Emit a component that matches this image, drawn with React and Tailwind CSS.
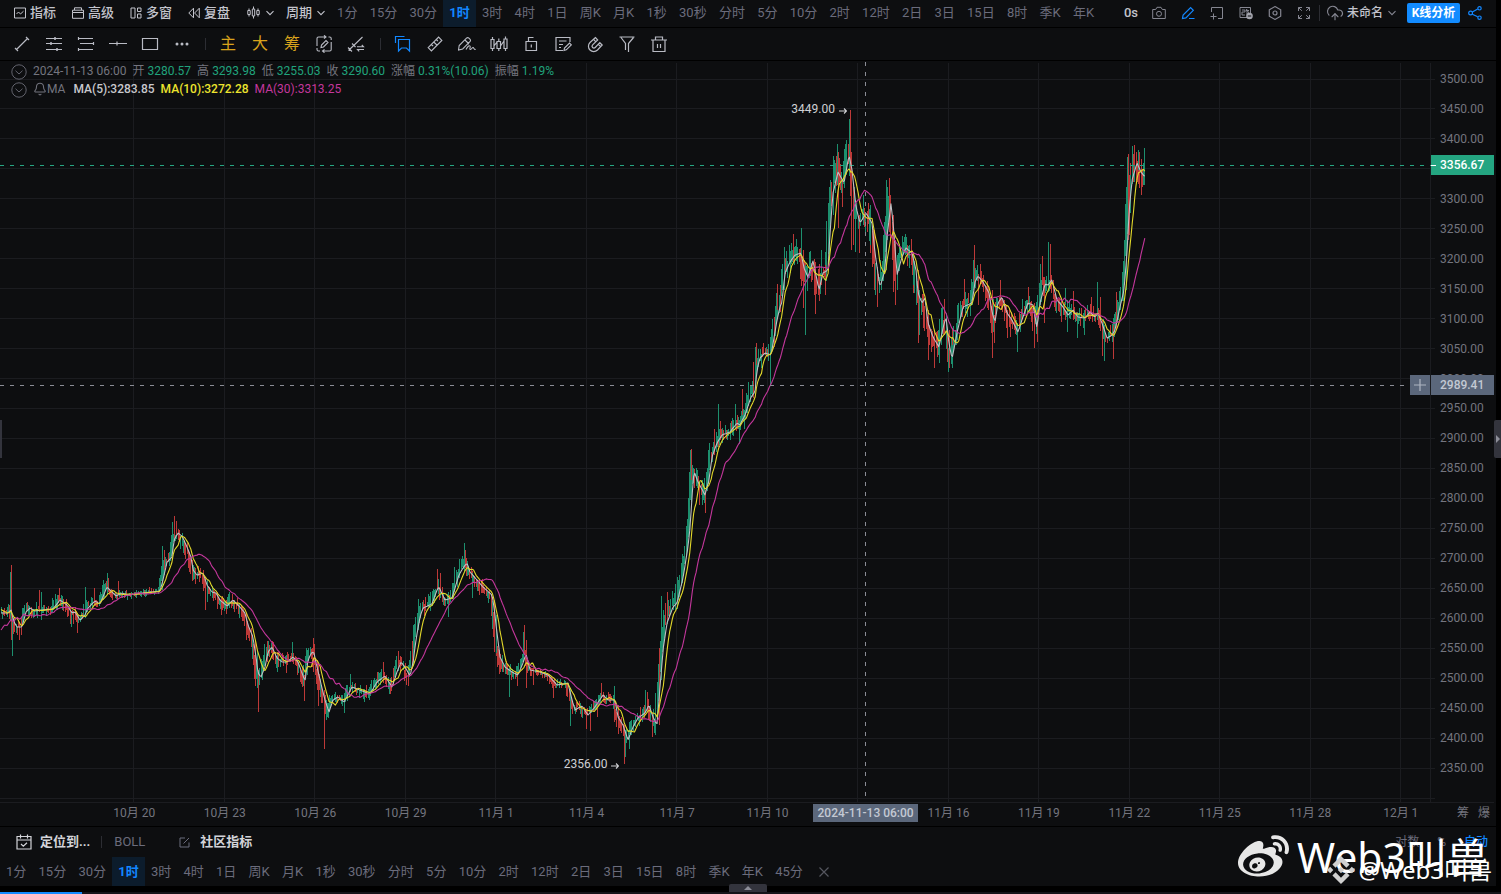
import React from "react";
import { FaWeibo } from "react-icons/fa";
import { SiBinance } from "react-icons/si";
import { Bell, Camera, CloudUpload } from "lucide-react";

const PERIODS = ["1分", "15分", "30分", "1时", "3时", "4时", "1日", "周K", "月K", "1秒", "30秒", "分时", "5分", "10分", "2时", "12时", "2日", "3日", "15日", "8时", "季K", "年K"];
const DATES = ["10月 20", "10月 23", "10月 26", "10月 29", "11月 1", "11月 4", "11月 7", "11月 10", "", "11月 16", "11月 19", "11月 22", "11月 25", "11月 28", "12月 1"];
const PRICES = Array.from({ length: 24 }, (_, i) => (3500 - i * 50).toFixed(2));

/* Five-bar average, as x,y pairs in chart units. The slower averages derive from it. */
const MA5 = [
  -40, 644, -12, 640, -8, 603, 1, 613, 8, 613, 11, 610, 14, 622, 17, 627, 22, 627, 26, 612, 30, 608, 35, 611, 42, 610, 53, 609, 60, 600, 67, 605, 72, 613, 75, 612, 80, 620, 85, 615, 88, 608, 95, 601, 100, 604, 107, 587, 112, 592, 116, 596, 122, 593, 128, 595, 143, 593, 160, 591, 163, 580, 167, 562, 172, 557, 174, 540, 178, 533, 182, 536, 187, 547, 191, 557, 193, 570, 197, 575, 203, 573, 207, 585, 212, 592, 216, 593, 220, 600, 227, 606, 233, 600, 240, 607, 245, 613, 248, 625, 253, 637, 256, 657, 258, 673, 261, 677, 265, 667, 268, 652, 272, 647, 277, 658, 282, 662, 287, 662, 293, 657, 298, 662, 302, 673, 305, 681, 308, 660, 312, 652, 314, 653, 317, 667, 322, 688, 325, 700, 329, 712, 333, 700, 338, 697, 344, 702, 352, 687, 360, 690, 370, 694, 377, 682, 385, 676, 392, 687, 397, 672, 401, 662, 405, 667, 410, 676, 413, 663, 416, 640, 420, 617, 423, 608, 432, 604, 437, 590, 439, 587, 445, 600, 452, 598, 455, 588, 459, 575, 463, 568, 467, 563, 470, 572, 477, 580, 483, 587, 492, 595, 494, 607, 497, 633, 500, 657, 505, 667, 512, 672, 518, 675, 523, 663, 526, 654, 530, 670, 540, 672, 548, 675, 557, 685, 568, 683, 572, 700, 575, 710, 582, 706, 588, 715, 595, 707, 603, 695, 608, 700, 615, 700, 618, 717, 623, 725, 628, 740, 633, 727, 638, 718, 645, 713, 649, 705, 653, 717, 657, 725, 659, 700, 663, 650, 667, 623, 673, 607, 677, 603, 683, 578, 688, 547, 690, 528, 692, 497, 694, 471, 698, 482, 705, 495, 709, 480, 712, 457, 717, 443, 722, 435, 730, 432, 737, 423, 740, 425, 745, 415, 751, 397, 755, 392, 757, 370, 760, 358, 765, 353, 771, 355, 774, 338, 777, 320, 780, 307, 782, 302, 785, 273, 790, 262, 795, 255, 801, 253, 804, 268, 808, 277, 813, 261, 817, 280, 819, 290, 823, 273, 828, 270, 830, 233, 833, 193, 838, 172, 844, 183, 849, 155, 852, 170, 856, 207, 860, 223, 866, 213, 872, 223, 875, 253, 880, 287, 885, 270, 887, 237, 891, 203, 894, 233, 897, 275, 902, 257, 906, 248, 912, 253, 916, 270, 918, 293, 922, 303, 925, 298, 928, 323, 933, 337, 939, 347, 943, 328, 946, 317, 949, 343, 952, 359, 957, 333, 963, 307, 972, 303, 975, 282, 978, 276, 983, 282, 989, 293, 992, 312, 995, 322, 998, 303, 1002, 297, 1007, 313, 1012, 320, 1018, 332, 1023, 317, 1028, 303, 1033, 305, 1037, 328, 1040, 303, 1045, 284, 1048, 285, 1052, 280, 1057, 300, 1063, 307, 1068, 315, 1073, 310, 1078, 317, 1085, 318, 1090, 312, 1095, 317, 1098, 313, 1102, 323, 1107, 338, 1112, 335, 1115, 330, 1120, 307, 1124, 290, 1127, 253, 1129, 213, 1132, 180, 1137, 163, 1141, 172, 1144, 176,
];

/* Typical half-range of a bar by position. */
const RANGE = [0, 8, 60, 8, 118, 5, 158, 4, 165, 8, 240, 9, 270, 9, 340, 7, 415, 9, 500, 8, 540, 4, 565, 6, 640, 8, 660, 13, 690, 13, 730, 9, 790, 14, 830, 18, 890, 14, 930, 14, 990, 13, 1060, 10, 1110, 9, 1130, 17, 1150, 14];

/* Long wicks: x, high, low, 1 for a rising bar. */
const WICKS = [
  10, 572, 620, 1, 11, 565, 640, 0, 12, 617, 656, 1, 19, 622, 640, 0, 39, 590, 607, 0, 41, 592, 620, 1, 59, 588, 600, 0, 70, 610, 624, 0, 71, 613, 627, 1, 77, 615, 633, 0, 85, 587, 618, 1, 94, 588, 605, 0, 103, 580, 600, 1, 107, 573, 590, 1, 108, 578, 592, 0, 118, 581, 595, 0, 162, 546, 590, 1, 164, 550, 570, 0, 172, 522, 552, 1, 174, 516, 533, 0, 176, 521, 535, 0, 192, 560, 581, 0, 195, 568, 584, 0, 205, 577, 610, 0, 207, 580, 602, 1, 217, 592, 609, 0, 221, 598, 615, 0, 226, 600, 614, 0, 239, 603, 618, 1, 246, 613, 640, 0, 255, 640, 686, 0, 257, 650, 688, 1, 258, 670, 712, 0, 259, 668, 685, 1, 267, 641, 660, 0, 271, 643, 650, 1, 273, 642, 655, 0, 277, 655, 672, 1, 286, 660, 673, 0, 292, 642, 660, 1, 302, 667, 687, 0, 304, 675, 701, 0, 307, 652, 675, 1, 313, 638, 655, 0, 314, 644, 665, 0, 317, 660, 690, 0, 318, 665, 706, 0, 324, 690, 749, 0, 326, 700, 720, 1, 328, 703, 718, 1, 344, 699, 713, 1, 350, 674, 690, 1, 383, 662, 675, 0, 377, 672, 683, 0, 398, 651, 668, 0, 390, 683, 694, 0, 408, 672, 686, 0, 413, 625, 665, 1, 418, 599, 630, 1, 437, 569, 590, 0, 440, 573, 592, 0, 448, 595, 617, 1, 454, 567, 592, 1, 459, 559, 575, 1, 464, 543, 562, 1, 465, 550, 568, 0, 472, 573, 598, 1, 494, 600, 652, 0, 496, 615, 653, 1, 499, 650, 674, 0, 509, 668, 697, 1, 517, 672, 686, 0, 523, 632, 662, 1, 524, 625, 655, 0, 526, 640, 688, 0, 533, 668, 685, 0, 553, 680, 698, 0, 570, 688, 726, 1, 586, 710, 729, 0, 590, 712, 731, 0, 597, 703, 717, 0, 601, 683, 698, 0, 614, 686, 700, 1, 618, 705, 734, 0, 624, 725, 764, 0, 625, 730, 757, 1, 629, 735, 749, 1, 645, 690, 712, 1, 647, 692, 712, 0, 652, 715, 737, 0, 655, 718, 735, 1, 659, 672, 725, 0, 661, 596, 680, 1, 663, 610, 630, 1, 665, 603, 625, 0, 667, 592, 620, 0, 677, 577, 605, 1, 686, 531, 555, 1, 689, 473, 530, 1, 690, 450, 500, 1, 691, 449, 480, 0, 702, 480, 505, 1, 705, 490, 513, 0, 718, 404, 440, 1, 714, 429, 455, 0, 720, 421, 440, 0, 735, 404, 428, 1, 739, 420, 444, 1, 742, 389, 415, 0, 744, 410, 429, 1, 748, 382, 405, 1, 755, 347, 390, 1, 756, 343, 365, 0, 770, 350, 386, 1, 772, 319, 350, 1, 776, 293, 320, 1, 777, 284, 310, 0, 784, 247, 290, 1, 793, 234, 262, 0, 801, 228, 256, 1, 803, 250, 308, 0, 805, 265, 335, 1, 815, 262, 314, 0, 821, 250, 275, 1, 825, 265, 295, 0, 829, 187, 260, 1, 833, 156, 215, 1, 837, 144, 185, 1, 838, 152, 228, 0, 842, 180, 207, 0, 846, 140, 175, 1, 849, 119, 165, 1, 850, 110, 175, 0, 851, 152, 250, 0, 853, 187, 245, 0, 855, 200, 252, 1, 859, 215, 253, 0, 863, 195, 225, 1, 870, 205, 245, 1, 874, 230, 290, 0, 877, 270, 307, 0, 881, 272, 290, 1, 886, 180, 270, 1, 887, 187, 240, 1, 889, 178, 215, 0, 890, 195, 220, 0, 893, 215, 292, 0, 895, 240, 305, 0, 897, 255, 290, 1, 905, 234, 255, 1, 913, 255, 285, 1, 918, 270, 343, 0, 919, 290, 335, 1, 928, 310, 360, 0, 934, 330, 368, 0, 939, 335, 363, 1, 941, 308, 345, 1, 944, 299, 325, 0, 949, 330, 368, 0, 952, 345, 368, 1, 957, 305, 340, 1, 964, 279, 305, 0, 974, 245, 285, 0, 973, 260, 290, 1, 978, 275, 305, 0, 992, 290, 358, 0, 994, 315, 343, 0, 1000, 280, 300, 0, 1007, 310, 338, 0, 1017, 325, 352, 1, 1028, 287, 305, 0, 1034, 303, 348, 0, 1037, 310, 342, 0, 1040, 264, 305, 1, 1042, 256, 285, 0, 1044, 280, 323, 0, 1048, 242, 292, 1, 1050, 244, 285, 0, 1061, 300, 322, 0, 1067, 300, 332, 1, 1065, 288, 305, 1, 1073, 291, 312, 0, 1077, 312, 338, 1, 1084, 310, 335, 1, 1091, 297, 315, 0, 1097, 282, 315, 1, 1100, 297, 330, 0, 1102, 320, 356, 0, 1104, 325, 361, 1, 1113, 325, 359, 0, 1116, 292, 330, 0, 1120, 288, 310, 1, 1126, 187, 290, 1, 1127, 157, 206, 1, 1128, 154, 240, 0, 1129, 175, 235, 0, 1130, 175, 213, 1, 1132, 146, 175, 1, 1134, 145, 165, 0, 1138, 150, 170, 1, 1139, 152, 175, 0, 1141, 170, 195, 0, 1144, 148, 185, 1,
];

const STEP = 90.5 / 72;

function at(series, x) {
  if (x <= series[0]) return series[1];
  for (let i = 2; i < series.length; i += 2) {
    if (x <= series[i]) {
      const t = (x - series[i - 2]) / (series[i] - series[i - 2]);
      return series[i - 1] + t * (series[i + 1] - series[i - 1]);
    }
  }
  return series[series.length - 1];
}

function average(groups) {
  const pts = [];
  for (let x = 1; x <= 1145; x += STEP) {
    let sum = 0;
    for (let g = 0; g < groups; g++) sum += at(MA5, x - g * 5 * STEP);
    pts.push(x.toFixed(1) + "," + (sum / groups).toFixed(1));
  }
  return pts.join(" ");
}

function buildBars() {
  let seed = 11;
  const rnd = () => {
    seed = (seed * 16807) % 2147483647;
    return seed / 2147483647;
  };
  const bars = [];
  for (let x = 1; x <= 1144; x += STEP) {
    const a = at(MA5, x + 1);
    const b = at(MA5, x + 3);
    const r = at(RANGE, x);
    const drift = (rnd() - 0.5) * r * 0.7;
    const high = Math.min(a, b) - r * (0.1 + rnd() * 0.8) + drift;
    const low = Math.max(a, b) + r * (0.1 + rnd() * 0.8) + drift;
    const up = rnd() < 0.52 + Math.max(-0.36, Math.min(0.36, (a - b) / 8));
    bars.push({ x: Math.floor(x), high: Math.round(high), low: Math.round(low), up });
  }
  for (let i = 0; i < WICKS.length; i += 4) {
    bars.push({ x: WICKS[i], high: WICKS[i + 1], low: WICKS[i + 2], up: WICKS[i + 3] === 1 });
  }
  return bars;
}

const BARS = buildBars();
const LINE5 = average(1);
const LINE10 = average(2);
const LINE30 = average(6);

function Ico({ d, size = "size-[18px]", box = 18, w = 1.2, className = "", children }) {
  return (
    <svg viewBox={`0 0 ${box} ${box}`} className={`${size} shrink-0 ${className}`} fill="none" stroke="currentColor" strokeWidth={w} aria-hidden="true">
      {d && <path d={d} />}
      {children}
    </svg>
  );
}

function Tool({ label, children, className = "text-[#b9bbc4]" }) {
  return (
    <button type="button" aria-label={label} className={`flex h-8 w-8 shrink-0 items-center justify-center ${className}`}>
      {children}
    </button>
  );
}

function Chevron() {
  return <Ico box={8} size="size-2" d="M0.5 2.2L4 5.7L7.5 2.2" w={1.1} />;
}

function Periods({ items, label, className }) {
  return (
    <nav aria-label={label} className={`flex h-full shrink-0 justify-between ${className}`}>
      {items.map((p) => (
        <button
          key={p}
          type="button"
          className={`flex h-full items-center px-1.5 whitespace-nowrap ${p === "1时" ? "bg-[#0c1c2c] font-bold text-[#1287ff]" : "text-[#6b6c7c]"}`}
        >
          {p}
        </button>
      ))}
    </nav>
  );
}

function TopBar() {
  return (
    <header className="flex h-7 shrink-0 items-center overflow-hidden border-b border-black pr-3.5 pl-3.5 text-[13px] text-[#c3c4cc]">
      <div className="flex shrink-0 items-center gap-4 pb-0.5 font-medium whitespace-nowrap">
        <button type="button" className="flex items-center gap-1">
          <Ico box={12} size="size-3" d="M.5 1h11v10H.5zM2.5 7L4.5 5l2 2L9.500 4.200" w={1} />
          指标
        </button>
        <button type="button" className="flex items-center gap-1">
          <Ico box={12} size="size-3" d="M2.500 3V.8h7V3M.5 5.500V3.200h11v2.300M.5 5.500h11v5.800H.5z" w={1} />
          高级
        </button>
        <button type="button" className="flex items-center gap-1">
          <Ico box={12} size="size-3" d="M1 1h4v10H1zM7.500 1H11v3.500H7.500zM7.500 7H11v4H7.500z" w={1} />
          多窗
        </button>
        <button type="button" className="flex items-center gap-1">
          <Ico box={12} size="size-3" d="M5.500 1.200v9.600L.8 6zM11.300 1.200v9.600L6.600 6z" w={1} />
          复盘
        </button>
      </div>
      <div className="ml-[17px] flex shrink-0 items-center gap-3 pb-0.5 font-medium whitespace-nowrap">
        <button type="button" aria-label="K线样式" className="flex items-center gap-1.5">
          <Ico box={13} size="size-[13px]" d="M.8 4.500h2.400v4H.8zM5.300 3h2.400v7H5.300zM9.800 4.500h2.400v4H9.800zM2 2.500v2M2 8.500v2M6.500 .5V3M6.500 10v2.500M11 2.500v2M11 8.500v2" w={1} />
          <Chevron />
        </button>
        <button type="button" className="flex items-center gap-[5px]">
          周期
          <Chevron />
        </button>
      </div>
      <div className="ml-1.5 h-full shrink-0">
        <Periods items={PERIODS} label="周期" className="w-[769px] *:pb-0.5" />
      </div>
      <div className="ml-auto flex shrink-0 items-center pb-0.5 text-[#858691]">
        <div className="flex items-center gap-[15px]">
          <span className="-mr-px font-medium text-[#c3c4cc]">0s</span>
          <button type="button" aria-label="截图">
            <Ico box={14} size="size-3.5" d="M.7 3.500h3L5 1.300h4l1.300 2.200h3v9H.7z" w={1}><circle cx="7" cy="7.800" r="2.500" /></Ico>
          </button>
          <button type="button" aria-label="画线" className="text-[#1287ff]">
            <Ico box={14} size="size-3.5" d="M1.500 12.500l.6-3.400L9.600 1.600l2.700 2.700L4.900 11.900zM8 12.500h5.500" />
          </button>
          <button type="button" aria-label="添加窗口">
            <Ico box={14} size="size-3.5" d="M1.500 6V1.500h11v11H8M.5 10.500h6M3.500 7.500v6" w={1} />
          </button>
          <button type="button" aria-label="图表">
            <Ico box={14} size="size-3.5" d="M1 1.500h10.500v10H1zM3 4h3v2H3v3h3M8 3.500v5M7 4.500h3M7 3l3 4" w={1}>
              <circle cx="10.500" cy="10" r="3.300" fill="#a3a4ad" stroke="none" />
              <path d="M8.800 10h3.400" stroke="#0d0e10" />
            </Ico>
          </button>
          <button type="button" aria-label="设置">
            <Ico box={14} size="size-3.5" d="M7 .6l5.700 3.200v6.400L7 13.400l-5.700-3.200V3.800z"><circle cx="7" cy="7" r="2" /></Ico>
          </button>
          <button type="button" aria-label="全屏">
            <Ico box={14} size="size-3.5" d="M1.500 5V1.500H5M1.500 1.500l3.300 3.300M9 1.500h3.500V5M12.500 1.500L9.200 4.800M12.500 9v3.500H9M12.500 12.500L9.200 9.200M5 12.500H1.500V9M1.500 12.500l3.300-3.300" w={1} />
          </button>
        </div>
        <span className="ml-2 h-4 w-px bg-[#2c2d33]" />
        <button type="button" className="ml-1.5 flex items-center gap-[3px] text-xs font-medium text-[#c3c4cc]">
          <CloudUpload className="size-[18px] text-[#858691]" strokeWidth={1.5} />
          未命名
          <span className="ml-0.5 text-[#858691]"><Chevron /></span>
        </button>
        <button type="button" className="ml-[11px] flex h-5 w-[53px] items-center justify-center rounded-xs bg-[#128bff] text-xs font-bold whitespace-nowrap text-white">K线分析</button>
        <button type="button" aria-label="分享" className="ml-2 text-[#1287ff]">
          <Ico box={14} size="size-3.5" d="M4.300 6L9.700 3M4.300 8.200l5.400 2.600">
            <circle cx="2.600" cy="7" r="1.900" /><circle cx="11.500" cy="2.300" r="1.700" /><circle cx="11.500" cy="11.700" r="1.700" />
          </Ico>
        </button>
      </div>
    </header>
  );
}

function ToolBar() {
  return (
    <div className="flex h-[33px] shrink-0 items-center overflow-hidden border-b border-black pl-1.5">
      <Tool label="线段"><Ico d="M3.500 14.500L14.500 3.500M2 13l3 3M13 2l3 3" /></Tool>
      <Tool label="平行线">
        <Ico d="M1 3.500h16M1 8.500h16M1 14.500h16"><path d="M10 2v3M6 7v3M12 13v3" strokeWidth="1.500" /></Ico>
      </Tool>
      <Tool label="价格线"><Ico d="M1 3.500h15M3 8.500h14M1 14.500h15M1.500 2v3M16.500 7v3M1.500 13v3" /></Tool>
      <Tool label="水平线"><Ico d="M0 8.500h18M8 6.500v4" /></Tool>
      <Tool label="矩形"><Ico d="M1.500 3.500h15v11h-15z" /></Tool>
      <Tool label="更多">
        <Ico><g fill="currentColor" stroke="none"><circle cx="4" cy="9" r="1.500" /><circle cx="9" cy="9" r="1.500" /><circle cx="14" cy="9" r="1.500" /></g></Ico>
      </Tool>
      <span className="mr-1.5 ml-[7px] h-3 w-px shrink-0 bg-[#2c2d33]" />
      <Tool label="主力" className="text-base text-[#d9a31c]">主</Tool>
      <Tool label="大单" className="text-base text-[#d9a31c]">大</Tool>
      <Tool label="筹码" className="text-base text-[#d9a31c]">筹</Tool>
      <Tool label="循环画线">
        <Ico d="M2 11V3.500Q2 2 3.500 2H11M9 .3L11 2 9 3.700M16.200 7v7.500q0 1.500-1.500 1.500H7.500M9.500 14.300L7.500 16l2 1.700M13.500 2h1.200q1.500 0 1.500 1.500V5M2 13v1.500Q2 16 3.500 16H5M6 12.500l.5-2.500L11 5.500l2 2-4.500 4.500z" w={1.1} />
      </Tool>
      <Tool label="切换画线"><Ico d="M1.500 15.500L15.500 2M1 12.500l4 4M5 8.500l3.500 3.500M10 11.800h6.500L14.800 10M17 14.500h-6.500l1.700 1.800" w={1.1} /></Tool>
      <span className="mr-1.5 ml-2 h-3 w-px shrink-0 bg-[#2c2d33]" />
      <Tool label="收藏" className="text-[#1287ff]"><Ico d="M1.500 8V1.500h9M4.500 4.500h11v11.500l-3-3h-5l-3 3z" /></Tool>
      <Tool label="测量"><Ico d="M2.200 12.600L12.600 2.200l3.200 3.200L5.400 15.800zM7.800 7l3.200 3.200M10.300 4.500l1.600 1.600M5.500 9.500l1.600 1.600" /></Tool>
      <Tool label="画笔"><Ico d="M.5 15l.7-4.500L8.500 3.200q1.200-1.200 2.400 0l1 1q1.200 1.200 0 2.400L4.700 14zM7 5l4 4M8 14.500c1.500-3 3.200-4.500 4-3.500s-.8 3 .2 3.500 2-2.500 3-2 .2 2 2.500 2" w={1.1} /></Tool>
      <Tool label="K线"><Ico d="M1 4.500h3v9H1zM7 6.500h3.500v7H7zM14 4h3v9.500h-3zM2.500 2v2.500M2.500 13.500V16M8.800 3.500v3M8.800 13.500V16M15.500 1.500V4M15.500 13.500V16M4 11l3-4M10.500 11l3.500-5" /></Tool>
      <Tool label="锁定"><Ico d="M4 6.500h10.500v9H4zM6.500 6.500V2.500H11.500M9.300 9.500v3" /></Tool>
      <Tool label="笔记"><Ico d="M16 7V2.500H2v13h7M5 6h7.500M5 9.500h4M5 12.500h2M10 15.500l.5-2.500 5-5 1.800 1.800-5 5z" /></Tool>
      <Tool label="磁吸"><Ico d="M9.500 2.500L4 7.500a5.200 5.200 0 0 0 7.500 7.500L16.200 10l-2.400-2.300-4.600 4.800a1.800 1.800 0 0 1-2.600-2.600L11.700 5zM7.600 4.300l2.300 2.500M14.600 11.600l-2.200-2.300" /></Tool>
      <Tool label="筛选"><Ico d="M1.500 2h15M3 2.500l4.500 6V15M15.500 2.500L10.500 8.500V17" /></Tool>
      <Tool label="删除"><Ico d="M1 5h16M5.500 5V2h7v3M3 5v11.500h12V5M7.500 9v4M10.500 9v4" /></Tool>
    </div>
  );
}

function Stat({ name, value }) {
  return (
    <div className="flex gap-[3px]">
      <dt className="text-[#74757f]">{name}</dt>
      <dd className="text-[#20a37c]">{value}</dd>
    </div>
  );
}

function Collapse({ label }) {
  return (
    <button type="button" aria-label={label} className="mt-0.5 text-[#62636d]">
      <Ico box={16} size="size-4" d="M4.500 6.700L8 10l3.500-3.300" w={1}><circle cx="8" cy="8" r="7.200" /></Ico>
    </button>
  );
}

function Arrow() {
  return <Ico box={8} size="size-2" className="mt-1" d="M0 4h7.500M5 1.500L7.500 4 5 6.500" w={1.1} />;
}

function Chart() {
  return (
    <main className="flex min-h-96 flex-1">
      <section aria-label="K线图" className="relative min-w-0 flex-1">
        <svg viewBox="0 61 1431 742" preserveAspectRatio="none" className="absolute inset-0 h-full w-full overflow-visible" fill="none">
          <g stroke="#1b1c20" strokeWidth="1">
            {PRICES.map((p, i) => (
              <path key={p} d={`M0 ${Math.round(78.5 + i * 29.98) + 0.5}H1435`} />
            ))}
            <path d="M0 798.500H1435M0 802.500H1494M1430.500 63V802" />
            {DATES.map((d, i) => (
              <path key={i} d={`M${Math.round(133 + i * 90.5) + 0.5} 63V802`} />
            ))}
          </g>
          <g strokeWidth="1">
            {BARS.map((b, i) => (
              <path key={i} d={`M${b.x + 0.5} ${b.high}V${b.low}`} stroke={b.up ? "#1d8f6e" : "#bd3938"} />
            ))}
          </g>
          <path d="M0 165.500H1431" stroke="#27a583" strokeDasharray="4 6" />
          <g strokeWidth="1.1" strokeLinejoin="round">
            <polyline points={LINE5} stroke="#bfc0c4" />
            <polyline points={LINE10} stroke="#e3d92b" />
            <polyline points={LINE30} stroke="#c4379c" />
          </g>
          <path d="M0 385.500H1410" stroke="#8b8d96" strokeDasharray="4 6" />
          <path d="M865.500 62V797" stroke="#8b8d96" strokeDasharray="4 6" />
        </svg>
        <div className="absolute top-px left-[11px] flex flex-col text-xs whitespace-nowrap">
          <div className="flex h-[18px] items-center gap-1.5">
            <Collapse label="收起行情" />
            <span className="text-[#74757f]">2024-11-13 06:00</span>
            <dl className="flex gap-1.5">
              <Stat name="开" value="3280.57" />
              <Stat name="高" value="3293.98" />
              <Stat name="低" value="3255.03" />
              <Stat name="收" value="3290.60" />
              <Stat name="涨幅" value="0.31%(10.06)" />
              <Stat name="振幅" value="1.19%" />
            </dl>
          </div>
          <div className="flex h-[18px] items-center gap-1.5">
            <Collapse label="收起均线" />
            <span className="mr-0.5 flex items-center text-[#74757f]">
              <Bell className="size-3.5" strokeWidth={1.8} />
              MA
            </span>
            <span className="font-medium text-[#c8c9cd]">MA(5):3283.85</span>
            <span className="font-medium text-[#ece42e]">MA(10):3272.28</span>
            <span className="text-[#c4379c]">MA(30):3313.25</span>
          </div>
        </div>
        <span className="absolute top-[5.4%] left-[55.3%] flex items-center gap-1 text-xs leading-4 whitespace-nowrap text-[#cfd0d4]">3449.00<Arrow /></span>
        <span className="absolute top-[93.6%] left-[39.4%] flex items-center gap-1 text-xs leading-4 whitespace-nowrap text-[#cfd0d4]">2356.00<Arrow /></span>
        <button type="button" aria-label="添加价格提醒" className="absolute top-[42.3%] right-px flex h-5 w-5 items-center justify-center bg-[#5b677b] text-[#aeb5c1]">
          <Ico box={14} size="size-3.5" d="M7 1v12M1 7h12" />
        </button>
      </section>
      <aside aria-label="价格" className="relative flex w-[65px] shrink-0 flex-col justify-between pt-2.5 pb-[27px] pl-[9px] text-xs leading-4 text-[#74757f]">
        {PRICES.map((p) => (
          <span key={p}>{p}</span>
        ))}
        <span className="absolute top-[12.7%] right-0.5 left-0 flex h-5 items-center bg-[#24a581] pl-[9px] font-medium text-white">
          <span className="absolute left-0 h-px w-[5px] bg-white" />
          3356.67
        </span>
        <span className="absolute top-[42.3%] right-0.5 left-0 flex h-5 items-center bg-[#5b677b] pl-[9px] font-medium text-[#c3c9d3]">2989.41</span>
      </aside>
    </main>
  );
}

function DateAxis() {
  return (
    <div className="relative flex h-6 shrink-0 items-center border-b border-black pb-[3px] pl-[89px] text-xs text-[#74757f]">
      <ol className="grid min-w-0 flex-1 grid-cols-15">
        {DATES.map((d, i) => (
          <li key={i} className="text-center whitespace-nowrap">{d}</li>
        ))}
      </ol>
      <div className="flex w-[50px] shrink-0 justify-end gap-[9px] pr-1.5">
        <button type="button">筹</button>
        <button type="button">爆</button>
      </div>
      <time className="absolute top-px left-[54.35%] flex h-[18px] w-[105px] items-center justify-center bg-[#5b677b] font-medium whitespace-nowrap text-[#c3c9d3]">2024-11-13 06:00</time>
    </div>
  );
}

function BottomBar() {
  return (
    <footer className="relative shrink-0">
      <div className="flex h-[30px] items-center pr-2 pl-4 text-[13px] whitespace-nowrap">
        <button type="button" className="flex items-center gap-2 font-bold text-[#d3d4d9]">
          <Ico box={16} size="size-4" d="M1 2.500h14v12.500H1zM1 6h14M4.500 .5v4M11.500 .5v4M5 10l2.300 2.200L11 8.800" />
          定位到...
        </button>
        <span className="ml-[11px] h-3 w-px bg-[#2c2d33]" />
        <button type="button" className="ml-3 text-[#6b6c7c]">BOLL</button>
        <button type="button" className="ml-[34px] flex items-center gap-2.5 font-bold text-[#d3d4d9]">
          <Ico box={11} size="size-[11px]" className="text-[#6b6c7c]" d="M6 1H1v9h9V5.500M4.500 6.500L10 1" w={1} />
          社区指标
        </button>
        <div className="ml-auto flex gap-[18px] text-xs text-[#6b6c7c]">
          <button type="button">对数</button>
          <button type="button">%</button>
          <button type="button" className="font-medium text-[#1287ff]">自动</button>
        </div>
      </div>
      <div className="flex h-[29px] items-center overflow-hidden text-[13px]">
        <Periods items={[...PERIODS, "45分"]} label="常用周期" className="w-[809px]" />
        <button type="button" aria-label="关闭" className="ml-[9px] text-[#55565f]">
          <Ico box={12} size="size-3" d="M1.500 1.500l9 9M10.500 1.500l-9 9" />
        </button>
      </div>
      <div className="absolute right-1 bottom-0.5 flex items-center text-[41px] leading-[54px] whitespace-nowrap text-white">
        <FaWeibo className="mr-2 size-[51px] text-[#e6e6e6]" aria-hidden="true" />
        <span className="mr-1 font-['Noto_Sans','Noto_Sans_CJK_SC',sans-serif]">Web3叫兽</span>
        <div className="absolute right-0 bottom-0 flex items-center gap-1 text-2xl leading-[28px]">
          <SiBinance className="size-7 text-[#d0d0d0]" aria-hidden="true" />
          <span className="font-['Noto_Sans','Noto_Sans_CJK_SC',sans-serif]">@Web3叫兽</span>
        </div>
      </div>
    </footer>
  );
}

export default function App() {
  return (
    <div className="relative flex min-h-screen flex-col overflow-hidden bg-black font-[Roboto,'Noto_Sans_CJK_SC',sans-serif]">
      <div className="mr-[5px] flex flex-1 flex-col bg-[#0d0e10]">
        <TopBar />
        <ToolBar />
        <Chart />
        <DateAxis />
        <BottomBar />
      </div>
      <div className="h-1.5 shrink-0" />
      <div className="h-0.5 shrink-0 bg-[#141419]">
        <div className="h-full w-[82px] bg-[#128bff]" />
      </div>
      <button type="button" aria-label="展开侧栏" className="absolute top-[47%] right-0 flex h-[38px] w-[7px] items-center justify-center rounded-l-xs bg-[#33343d] text-[#8d8e99]">
        <svg viewBox="0 0 4 8" className="h-2 w-1" fill="currentColor"><path d="M0 0l4 4-4 4z" /></svg>
      </button>
      <span className="absolute top-[47%] left-0 h-[38px] w-0.5 bg-[#33343d]" />
      <button type="button" aria-label="展开底栏" className="absolute bottom-0.5 left-[729px] flex h-2 w-[38px] items-center justify-center rounded-t-xs bg-[#33343d] text-[#8d8e99]">
        <svg viewBox="0 0 8 4" className="h-1 w-2" fill="currentColor"><path d="M0 4l4-4 4 4z" /></svg>
      </button>
    </div>
  );
}
